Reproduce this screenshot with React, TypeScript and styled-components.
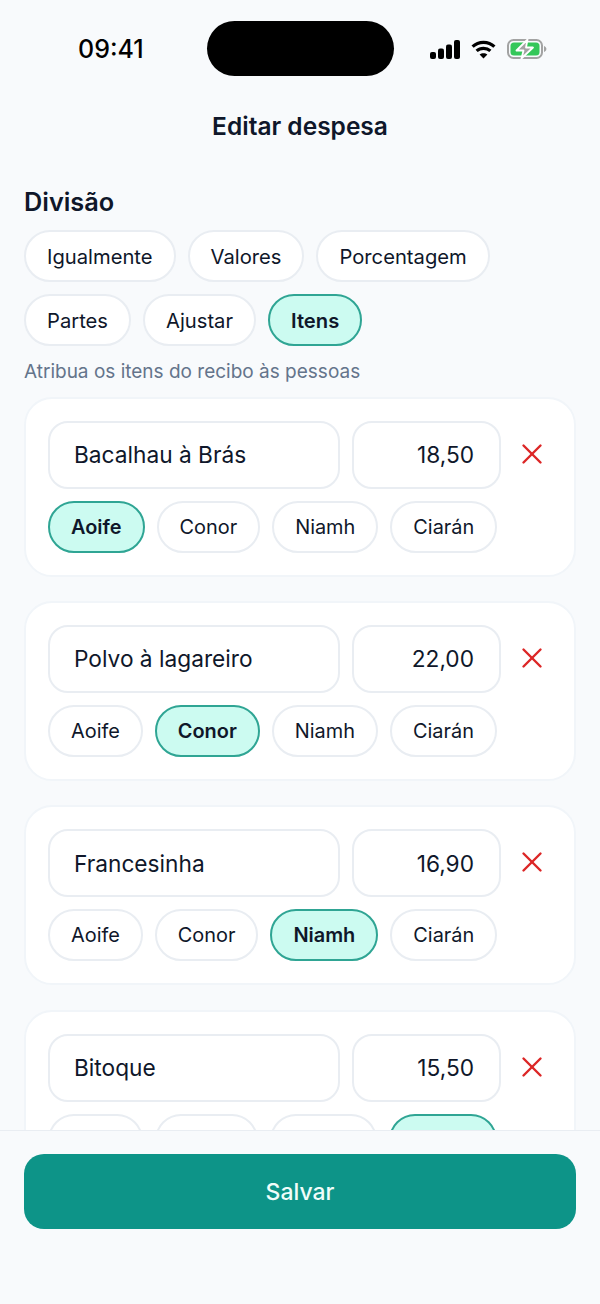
import React from "react";
import styled, { createGlobalStyle } from "styled-components";

const GlobalStyle = createGlobalStyle`
    html, body {
        margin: 0;
        padding: 0;
        background: #f8fafc;
    }
    * {
        box-sizing: border-box;
    }
`;

const Page = styled.div`
    width: 600px;
    height: 1304px;
    display: flex;
    flex-direction: column;
    position: relative;
    overflow: hidden;
    background: #f8fafc;
    color: #0f172a;
    font-family: Inter, "Liberation Sans", sans-serif;
`;

const StatusBar = styled.div`
    height: 98px;
    flex: none;
    display: flex;
    align-items: center;
    justify-content: space-between;
    padding: 0 53px 0 78px;
`;

const Time = styled.span`
    font-size: 25px;
    font-weight: 500;
    color: #000;
`;

const Island = styled.div`
    position: absolute;
    left: 207px;
    top: 21px;
    width: 187px;
    height: 55px;
    border-radius: 28px;
    background: #000;
`;

const StatusIcons = styled.div`
    display: flex;
    align-items: center;
    gap: 11px;
`;

const Header = styled.h1`
    height: 56px;
    flex: none;
    margin: 0;
    display: flex;
    align-items: center;
    justify-content: center;
    font-size: 24.500px;
    font-weight: 600;
`;

const Scroll = styled.main`
    flex: 1;
    min-height: 0;
    overflow: hidden;
    padding: 32px 24px 0;
`;

const SectionTitle = styled.h2`
    margin: 0 0 12px;
    font-size: 25.300px;
    line-height: 32px;
    font-weight: 600;
`;

const ChipRow = styled.div`
    display: flex;
    flex-wrap: wrap;
    gap: 12px;
`;

const Chip = styled.div<{ $active?: boolean; $size: number }>`
    height: 52px;
    padding: 0 21px;
    display: flex;
    align-items: center;
    border-radius: 26px;
    font-size: ${(p) => p.$size}px;
    font-weight: ${(p) => (p.$active ? 600 : 400)};
    color: #0f172a;
    background: ${(p) => (p.$active ? "#ccfbf1" : "#fff")};
    border: 2px solid ${(p) => (p.$active ? "#2fa594" : "#e9edf2")};
`;

const Hint = styled.p`
    margin: 14px 0 12.600px;
    font-size: 19px;
    line-height: 24px;
    color: #64748b;
`;

const Card = styled.section`
    margin-bottom: 24.400px;
    padding: 22px;
    display: flex;
    flex-direction: column;
    gap: 12px;
    border-radius: 28px;
    background: #fff;
    border: 2px solid #f1f5f9;
`;

const FieldRow = styled.div`
    display: flex;
    align-items: center;
`;

const Field = styled.div<{ $amount?: boolean }>`
    height: 68px;
    flex: none;
    padding: ${(p) => (p.$amount ? "0 25px 0 24px" : "0 24px")};
    display: flex;
    align-items: center;
    justify-content: ${(p) => (p.$amount ? "flex-end" : "flex-start")};
    width: ${(p) => (p.$amount ? "149px" : "292px")};
    margin-right: ${(p) => (p.$amount ? "0" : "12px")};
    border-radius: 20px;
    border: 2px solid #e9edf2;
    background: #fff;
    font-size: 22.700px;
    color: #0f172a;
`;

const RemoveButton = styled.div`
    width: 40px;
    flex: none;
    margin: 0 0 2px 11px;
    display: flex;
    align-items: center;
    justify-content: center;
    color: #dc2626;
`;

const Footer = styled.footer`
    flex: none;
    height: 174px;
    padding: 23px 24px 0;
    background: #f8fafc;
    border-top: 1px solid #e9edf2;
`;

const SaveButton = styled.div`
    height: 75px;
    display: flex;
    align-items: center;
    justify-content: center;
    border-radius: 20px;
    background: #0d9488;
    color: #f0fdfa;
    font-size: 23px;
    font-weight: 500;
`;

const people = ["Aoife", "Conor", "Niamh", "Ciarán"];
const modes = ["Igualmente", "Valores", "Porcentagem", "Partes", "Ajustar", "Itens"];

const items = [
    { name: "Bacalhau à Brás", amount: "18,50", owner: "Aoife" },
    { name: "Polvo à lagareiro", amount: "22,00", owner: "Conor" },
    { name: "Francesinha", amount: "16,90", owner: "Niamh" },
    { name: "Bitoque", amount: "15,50", owner: "Ciarán" },
];

const SignalIcon = () => (
    <svg width="30" height="19" viewBox="0 0 30 19" fill="#000">
        <rect x="0" y="12" width="6" height="7" rx="2" />
        <rect x="8" y="8.5" width="6" height="10.5" rx="2" />
        <rect x="16" y="4.5" width="6" height="14.5" rx="2" />
        <rect x="24" y="0" width="6" height="19" rx="2" />
    </svg>
);

const WifiIcon = () => (
    <svg width="25" height="19" viewBox="0 0 25 19" fill="none" stroke="#000" strokeWidth="3.2">
        <path d="M1.6 6.6C7.6 .9 17.4 .9 23.4 6.6" />
        <path d="M5.6 10.9C9.4 7.4 15.6 7.4 19.4 10.9" />
        <path d="M12.5 18.6L8.6 14.6C10.8 12.8 14.2 12.8 16.4 14.6Z" fill="#000" stroke="none" />
    </svg>
);

const BatteryIcon = () => (
    <svg width="40" height="20" viewBox="0 0 40 20">
        <rect x="1" y="1" width="34" height="18" rx="5.5" fill="none" stroke="#a3a3a3" strokeWidth="2" />
        <path d="M37 7v6c1.4-.5 2.4-1.6 2.4-3S38.400 7.500 37 7Z" fill="#a3a3a3" />
        <rect x="3.500" y="3.500" width="29" height="13" rx="3.500" fill="#34c759" />
        <path d="M20.500 0.500L9.500 11.500H16.500L14.500 19.500L26 8.500H19Z" fill="#a3a3a3" stroke="#fff" strokeWidth="1.800" strokeLinejoin="round" />
    </svg>
);

const CloseIcon = () => (
    <svg width="24" height="24" viewBox="0 0 24 24" fill="none" stroke="currentColor" strokeWidth="2.400" strokeLinecap="round">
        <path d="M3.500 3.500L20.500 20.500" />
        <path d="M20.500 3.500L3.500 20.500" />
    </svg>
);

export default function App() {
    return (
        <Page>
            <GlobalStyle />
            <StatusBar>
                <Time>09:41</Time>
                <StatusIcons>
                    <SignalIcon />
                    <WifiIcon />
                    <BatteryIcon />
                </StatusIcons>
            </StatusBar>
            <Island />
            <Header>Editar despesa</Header>
            <Scroll>
                <SectionTitle>Divisão</SectionTitle>
                <ChipRow>
                    {modes.map((mode) => (
                        <Chip key={mode} $size={20.2} $active={mode === "Itens"}>{mode}</Chip>
                    ))}
                </ChipRow>
                <Hint>Atribua os itens do recibo às pessoas</Hint>
                {items.map((item) => (
                    <Card key={item.name}>
                        <FieldRow>
                            <Field>{item.name}</Field>
                            <Field $amount>{item.amount}</Field>
                            <RemoveButton><CloseIcon /></RemoveButton>
                        </FieldRow>
                        <ChipRow>
                            {people.map((person) => (
                                <Chip key={person} $size={19.9} $active={person === item.owner}>{person}</Chip>
                            ))}
                        </ChipRow>
                    </Card>
                ))}
            </Scroll>
            <Footer>
                <SaveButton>Salvar</SaveButton>
            </Footer>
        </Page>
    );
}
